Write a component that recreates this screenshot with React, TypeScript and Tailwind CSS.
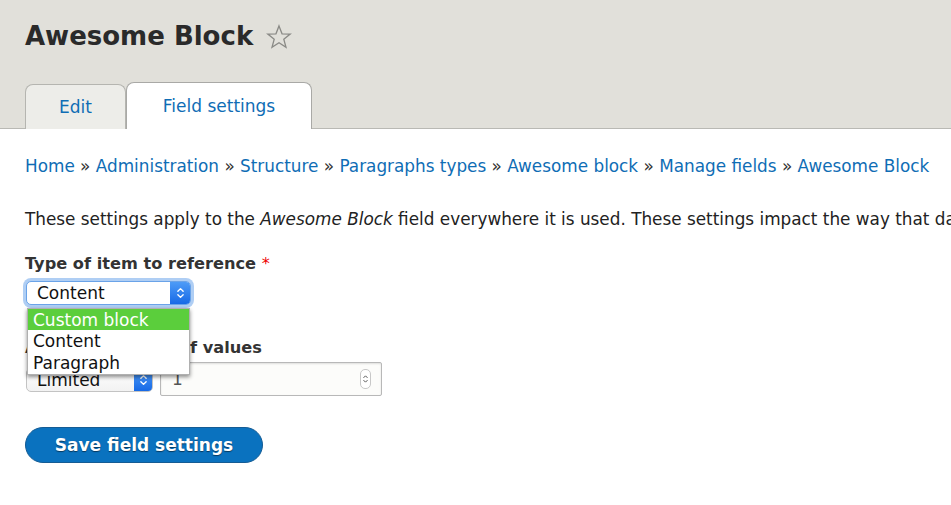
import React from "react";

const Chevrons = ({ className = "" }: { className?: string }) => (
  <svg viewBox="0 0 10 16" className={className} fill="none" stroke="white" strokeWidth="1.6" strokeLinecap="round" strokeLinejoin="round">
    <path d="M2 6 L5 3 L8 6" />
    <path d="M2 10 L5 13 L8 10" />
  </svg>
);

export default function App() {
  const crumbs = ["Home", "Administration", "Structure", "Paragraphs types", "Awesome block", "Manage fields", "Awesome Block"];
  return (
    <div
      className="w-[951px] h-[505px] overflow-hidden bg-white relative text-[#222]"
      style={{ fontFamily: '"DejaVu Sans", Verdana, sans-serif' }}
    >
      {/* Header */}
      <div className="bg-[#e1e0da] border-b border-[#b9b9b4] h-[129px] flex flex-col justify-between">
        <div className="pl-[25px] pt-[19px] flex items-center gap-[12px]">
          <h1 className="text-[26px] leading-[34px] font-bold text-[#2a2a2a]">Awesome Block</h1>
          <svg viewBox="0 0 24 24" className="w-[28px] h-[28px] mt-[1px]" fill="none" stroke="#8a8a86" strokeWidth="1.1" strokeLinejoin="miter">
            <path d="M12 2.5 L14.6 9.3 L21.6 9.5 L16.1 13.9 L18 20.9 L12 16.9 L6 20.9 L7.9 13.9 L2.4 9.5 L9.4 9.3 Z" />
          </svg>
        </div>
        <div className="pl-[25px] flex items-end -mb-px">
          <div className="w-[101px] h-[45px] bg-[#edede9] border border-[#b5b5b0] border-b-0 rounded-t-[8px] flex items-center justify-center pt-[2px] text-[#0f6db5] text-[17px]">
            Edit
          </div>
          <div className="w-[186px] h-[47px] bg-white border border-[#a9a9a6] border-b-0 rounded-t-[8px] flex items-center justify-center pt-[2px] text-[#0f6db5] text-[17px]">
            Field settings
          </div>
        </div>
      </div>

      {/* Content */}
      <div className="pl-[25px]">
        <div className="pt-[26px] text-[16.85px] leading-[22px] whitespace-nowrap">
          {crumbs.map((c, i) => (
            <span key={i}>
              <span className="text-[#0f6db5]">{c}</span>
              {i < crumbs.length - 1 && <span className="text-[#333]"> » </span>}
            </span>
          ))}
        </div>
        <p className="mt-[31px] text-[16.85px] leading-[22px] whitespace-nowrap text-[#222]">
          These settings apply to the <em>Awesome Block</em> field everywhere it is used. These settings impact the way that data is stored in the database and cannot be changed once data has been created.
        </p>

        <div className="mt-[23px] text-[16.2px] leading-[22px] font-bold text-[#333]">
          Type of item to reference <span className="text-[#e00] font-normal">*</span>
        </div>
        <div className="mt-[6px] ml-[1px] w-[165px] h-[24px] rounded-[5px] bg-white border border-[#6aa3e8] shadow-[0_0_0_3px_rgba(110,165,235,0.55)] flex items-center justify-between">
          <span className="pl-[10px] text-[17px] leading-none text-[#111]">Content</span>
          <div className="w-[20px] h-[22px] rounded-r-[4px] bg-gradient-to-b from-[#4d9bf7] to-[#1669e6] flex items-center justify-center">
            <Chevrons className="w-[9px] h-[14px]" />
          </div>
        </div>

        <div className="mt-[32px] text-[16.2px] leading-[22px] font-bold text-[#333]">
          Allowed number of values
        </div>
        <div className="flex items-start gap-[7px] mt-[3px]">
          <div className="mt-[6px] ml-[1px] w-[127px] h-[24px] rounded-[5px] bg-gradient-to-b from-white to-[#f2f2f2] border border-[#c3c3c3] flex items-center justify-between">
            <span className="pl-[10px] text-[17px] leading-none text-[#111]">Limited</span>
            <div className="w-[18px] h-[22px] rounded-r-[4px] bg-gradient-to-b from-[#4d9bf7] to-[#1669e6] flex items-center justify-center">
              <Chevrons className="w-[9px] h-[14px]" />
            </div>
          </div>
          <div className="w-[222px] h-[34px] rounded-[2px] bg-[#fcfcfa] border border-[#b8b8b8] shadow-[inset_0_1px_2px_rgba(0,0,0,0.12)] flex items-center justify-between">
            <span className="pl-[11px] text-[17px] leading-none text-[#555]">1</span>
            <div className="mr-[10px] w-[11px] h-[20px] rounded-[5px] border border-[#c8c8c8] bg-white flex items-center justify-center">
              <svg viewBox="0 0 10 16" className="w-[7px] h-[12px]" fill="none" stroke="#555" strokeWidth="1.4" strokeLinecap="round" strokeLinejoin="round">
                <path d="M2.5 6 L5 3.5 L7.5 6" />
                <path d="M2.5 10 L5 12.5 L7.5 10" />
              </svg>
            </div>
          </div>
        </div>

        <button className="mt-[31px] w-[238px] h-[36px] rounded-full bg-[#0a72bf] border border-[#155c94] text-white font-bold text-[17px] leading-none [text-shadow:0_1px_1px_rgba(0,0,0,0.5)]">
          Save field settings
        </button>
      </div>

      {/* Dropdown list overlay */}
      <div className="absolute left-[27px] top-[308px] w-[163px] bg-white border border-[#b0b0b0] shadow-[0_2px_4px_rgba(0,0,0,0.45)] text-[17px] leading-[22px] text-[#111]">
        <div className="bg-[#5bce3c] text-white pl-[5px] h-[21px] flex items-center">Custom block</div>
        <div className="pl-[5px] h-[22px] flex items-center">Content</div>
        <div className="pl-[5px] h-[22px] flex items-center">Paragraph</div>
      </div>
    </div>
  );
}
